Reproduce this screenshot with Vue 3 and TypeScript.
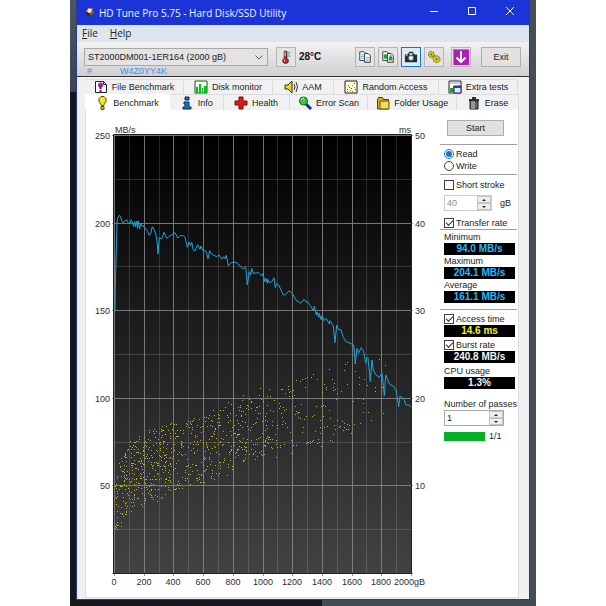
<script setup lang="ts">
import { ref } from 'vue'

interface Tab { name: string; icon: string }

const backTabs: Tab[] = [
  { name: 'File Benchmark', icon: 'file' },
  { name: 'Disk monitor', icon: 'monitor' },
  { name: 'AAM', icon: 'speaker' },
  { name: 'Random Access', icon: 'random' },
  { name: 'Extra tests', icon: 'extra' },
]
const frontTabs: Tab[] = [
  { name: 'Benchmark', icon: 'bulb' },
  { name: 'Info', icon: 'info' },
  { name: 'Health', icon: 'health' },
  { name: 'Error Scan', icon: 'scan' },
  { name: 'Folder Usage', icon: 'folder' },
  { name: 'Erase', icon: 'erase' },
]
const tools = [
  { name: 'Copy text', icon: 'copy' },
  { name: 'Copy image', icon: 'copygreen' },
  { name: 'Save screenshot', icon: 'camera' },
  { name: 'Options', icon: 'gears' },
  { name: 'Minimize to tray', icon: 'down' },
]

const active = ref('Benchmark')
const mode = ref('read')
const shortStroke = ref(false)
const transferRate = ref(true)
const accessTime = ref(true)
const burstRate = ref(true)
const strokeSize = ref(40)
const passes = ref(1)
const done = 100

// Plot area inside the chart, in chart units
const left = 114
const top = 135
const width = 297
const height = 438

const columns = Array.from({ length: 21 }, (_, i) => ({ x: Math.round(left + (i * width) / 20), major: i % 2 === 0 }))
const rows = Array.from({ length: 11 }, (_, i) => ({ y: Math.round(top + (i * height) / 10), major: i % 2 === 0 }))
const speedLabels = [250, 200, 150, 100, 50].map((value, i) => ({ value, y: top + 4 + Math.round((i * height) / 5) }))
const timeLabels = [50, 40, 30, 20, 10].map((value, i) => ({ value, y: top + 4 + Math.round((i * height) / 5) }))
const sizeLabels = Array.from({ length: 10 }, (_, i) => ({ value: i * 200, x: Math.round(left + (i * width) / 10) }))

// Transfer rate samples, three units per chart unit, relative to (85, 120)
const samples: number[][] = [
  [90, 572], [91, 500], [94, 390], [96, 310], [98, 293], [103, 286], [107, 290], [110, 303], [115, 309], [119, 303],
  [125, 299], [129, 307], [134, 312], [138, 299], [143, 309], [146, 320], [149, 304], [152, 321], [155, 303], [158, 325],
  [160, 302], [164, 326], [167, 310], [171, 318], [174, 316], [178, 323], [182, 325], [188, 335], [193, 346], [197, 340],
  [202, 320], [208, 330], [213, 345], [217, 370], [219, 402], [223, 352], [230, 357], [237, 337], [245, 355], [254, 348],
  [270, 338], [278, 354], [286, 347], [295, 347], [300, 352], [303, 365], [307, 382], [312, 366], [316, 377], [320, 366],
  [325, 390], [330, 393], [338, 374], [345, 388], [348, 378], [354, 392], [362, 393], [365, 400], [369, 416], [374, 392],
  [380, 403], [395, 410], [403, 405], [410, 418], [416, 410], [420, 416], [424, 406], [430, 437], [440, 427], [453, 427],
  [466, 438], [475, 447], [482, 440], [487, 495], [493, 455], [497, 465], [500, 445], [505, 460], [520, 458], [531, 468],
  [534, 460], [539, 485], [543, 475], [547, 490], [549, 478], [553, 488], [560, 485], [567, 473], [571, 503], [575, 490],
  [581, 495],
]
// Second half of the run, relative to (250, 290)
const tail: number[][] = [
  [93, 0], [100, 15], [107, 14], [117, 2], [128, 12], [138, 30], [152, 40], [162, 28], [168, 36], [173, 36],
  [180, 46], [190, 62], [193, 48], [199, 75], [201, 66], [206, 82], [208, 70], [213, 89], [217, 76], [222, 92], [228, 85],
  [238, 102], [240, 92], [247, 104], [250, 108], [255, 158], [260, 105], [265, 118], [273, 120], [279, 140], [288, 155],
  [297, 158], [311, 165], [316, 222], [321, 175], [326, 188], [334, 173], [341, 185], [347, 220], [350, 205], [354, 203],
  [361, 275], [366, 210], [370, 240], [378, 255], [388, 262], [396, 250], [403, 317], [407, 255], [412, 265], [418, 282],
  [432, 290], [438, 300], [446, 350], [450, 318], [462, 328], [468, 345], [478, 345], [483, 352],
]
const trace = [...samples, ...tail.map(([x, y]) => [x + 495, y + 510])]
  .map(([x, y]) => `${(85 + x / 3).toFixed(1)},${(120 + y / 3).toFixed(1)}`)
  .join(' ')

// Access time dots: dense short seeks come from a fixed-seed spread, long seeks are listed one by one
const lowerEdge = [[114, 536], [120, 528], [130, 515], [144, 505], [174, 496], [204, 484], [234, 474], [262, 460], [310, 454]]
const upperEdge = [[114, 488], [120, 457], [130, 440], [144, 428], [174, 420], [204, 408], [234, 398], [262, 386], [310, 373]]
function edge(table: number[][], x: number): number {
  for (let i = 1; i < table.length; i++) {
    const [x0, y0] = table[i - 1]
    const [x1, y1] = table[i]
    if (x <= x1) return y0 + ((y1 - y0) * (x - x0)) / (x1 - x0)
  }
  return table[table.length - 1][1]
}
let seed = 20417
function random(): number {
  seed = (seed + 0x6d2b79f5) | 0
  let t = Math.imul(seed ^ (seed >>> 15), 1 | seed)
  t = (t + Math.imul(t ^ (t >>> 7), 61 | t)) ^ t
  return ((t ^ (t >>> 14)) >>> 0) / 4294967296
}
const dots: number[][] = []
for (let i = 0; i < 900; i++) {
  const x = left + 1 + (width - 1) * (1 - Math.sqrt(random()))
  const t = random() * 0.92 + random() * 0.08
  if (x > 292) continue
  const low = edge(lowerEdge, x)
  dots.push([Math.round(x), Math.round(low + (edge(upperEdge, x) - low) * t + random() * 4 - 2)])
}
const longSeeks: number[][] = [
  [128, 300], [121, 303], [131, 315], [126, 318], [139, 270], [151, 274], [156, 268], [164, 263], [165, 291], [170, 262],
  [184, 261], [190, 252], [201, 267], [217, 270], [222, 283], [227, 290], [229, 298], [238, 236], [247, 268], [249, 290],
  [250, 301], [253, 280], [255, 296], [273, 303], [284, 222], [291, 217], [283, 241], [290, 283], [316, 243], [328, 260],
  [328, 282], [341, 268], [351, 284], [375, 291], [375, 302], [388, 206], [405, 226], [397, 290], [310, 332], [323, 325],
  [338, 327], [338, 338], [339, 367], [353, 365], [363, 391], [400, 368], [331, 398], [311, 403], [304, 428], [297, 405],
  [294, 417], [290, 401], [287, 416], [282, 399], [283, 411], [280, 421], [275, 392], [270, 407], [266, 411], [260, 390],
  [255, 418], [252, 404], [248, 433], [246, 453], [241, 451], [239, 383], [236, 360], [230, 407], [225, 349], [223, 411],
  [218, 346], [215, 366], [212, 469], [210, 428], [207, 457], [204, 447], [201, 460], [198, 347], [194, 422], [192, 376],
  [187, 452], [185, 379], [181, 453], [179, 458], [175, 455], [169, 377], [167, 458], [162, 387], [159, 410], [156, 427],
  [153, 342], [150, 384], [148, 367], [144, 380], [143, 365], [140, 370], [136, 371], [137, 464], [134, 348], [128, 466],
  [213, 347], [209, 389], [262, 310], [216, 305], [259, 328], [220, 378], [210, 410], [190, 449], [170, 456], [139, 363],
]
longSeeks.forEach(([x, y]) => dots.push([Math.round(250 + x / 3), Math.round(290 + y / 3)]))
</script>

<template>
  <div class="desktop">
    <main class="window">
      <header class="titlebar">
        <svg class="app-icon" viewBox="0 0 12 12" aria-hidden="true">
          <path d="M1 5 5 1l6 2v4L6 11 3 9z" fill="#3a2c20" />
          <path d="M2 5 5 1l5 1-3 5z" fill="#c8a878" /><circle cx="6" cy="4" r="2" fill="#fff0d0" />
          <path d="M7 7l3-4 1 3-4 4z" fill="#7c6850" />
        </svg>
        <h1>HD Tune Pro 5.75 - Hard Disk/SSD Utility</h1>
        <div class="caption-buttons">
          <button aria-label="Minimize"><svg viewBox="0 0 10 10"><path d="M1 5.500h8" /></svg></button>
          <button aria-label="Maximize"><svg viewBox="0 0 10 10"><path d="M1.500 1.500h7v7h-7z" /></svg></button>
          <button aria-label="Close"><svg viewBox="0 0 10 10"><path d="M1 1l8 8M9 1l-8 8" /></svg></button>
        </div>
      </header>

      <nav class="menu">
        <button><u>F</u>ile</button>
        <button><u>H</u>elp</button>
      </nav>

      <section class="toolbar">
        <div class="drive">
          <div class="combo">
            <select aria-label="Drive"><option>ST2000DM001-1ER164 (2000 gB)</option></select>
            <svg class="chevron" viewBox="0 0 8 5"><path d="M0.500 0.500 4 4 7.500 0.500" /></svg>
          </div>
          <div class="serial"><span>#</span><span>W4Z0YY4K</span></div>
        </div>
        <button class="tool" aria-label="Temperature">
          <svg viewBox="0 0 16 16">
            <path d="M6 1.500h3v8l1.500 1.500v3l-1.500 1h-3l-1.500-1v-3L6 9.500z" fill="#d81820" stroke="#302020" />
            <path d="M6.500 2h1v5h-1z" fill="#f4f4f4" /><path d="M6 11h1v2H6z" fill="#fff" />
            <path d="M10 3h3M10 5h2M10 7h3" stroke="#309090" />
          </svg>
        </button>
        <strong class="temperature">28°C</strong>
        <div class="tools">
          <button v-for="t in tools" :key="t.name" :class="['tool', t.icon]" :aria-label="t.name">
            <svg v-if="t.icon === 'copy' || t.icon === 'copygreen'" viewBox="0 0 16 16">
              <path d="M2 2h5l2 2v8H2z" fill="#fff" stroke="#303848" />
              <path d="M7.500 4h4l2.500 2.500V14H7.500z" fill="#fff" stroke="#202020" />
              <g v-if="t.icon === 'copy'" stroke="#5cb0f0"><path d="M3 5.500h4M3 7.500h4M3 9.500h4M9 8.500h4M9 10.500h4M9 12.500h3" /></g>
              <g v-else fill="#20a030"><path d="M3 5h4v5H3z" /><path d="M9 8h4v4H9z" /><path d="M10 6h2v2h-2z" fill="#3060c0" /></g>
            </svg>
            <svg v-else-if="t.icon === 'camera'" viewBox="0 0 16 16">
              <path d="M1 5h3l2-3h4l2 3h3v9H1z" fill="#26302c" />
              <path d="M6 3.500h4v2H6z" fill="#b8d8c8" /><circle cx="8" cy="9" r="3" fill="#90a89c" /><path d="M7 7h2v4H7zM6 8h4v2H6z" fill="#e8fff0" />
              <path d="M2 6h2v1H2z" fill="#d0d0d0" />
            </svg>
            <svg v-else-if="t.icon === 'gears'" viewBox="0 0 16 16">
              <circle cx="5" cy="5" r="3.500" fill="#d0c028" stroke="#706410" stroke-dasharray="2 1" />
              <circle cx="11" cy="10.500" r="4" fill="#d0c028" stroke="#706410" stroke-dasharray="2 1" />
              <circle cx="5" cy="5" r="1" fill="#706410" /><circle cx="11" cy="10.500" r="1" fill="#706410" /><path d="M5 9l4-3" stroke="#807018" />
            </svg>
            <svg v-else viewBox="0 0 16 16">
              <path d="M0 0h16v16H0z" fill="#b01cb8" /><path d="M0 0h16v1H1v15H0z" fill="#d860dc" />
              <path d="M8 2v11M3.500 8.500 8 13l4.500-4.500" fill="none" stroke="#fff" stroke-width="2" />
            </svg>
          </button>
        </div>
        <button class="exit">Exit</button>
      </section>

      <section class="content">
        <nav v-for="(row, r) in [backTabs, frontTabs]" :key="r" :class="['tabs', r === 0 ? 'back' : 'front']">
          <button v-for="tab in row" :key="tab.name" :class="['tab', { active: active === tab.name }]" @click="active = tab.name">
            <svg viewBox="0 0 14 14" aria-hidden="true">
              <g v-if="tab.icon === 'file'">
                <path d="M1.500 1.500h8l3 3v8h-11z" fill="#fff" stroke="#222" /><path d="M9.500 1.500v3h3" fill="none" stroke="#222" />
                <circle cx="6.500" cy="5" r="2.500" fill="#a020b0" /><path d="M5.500 6h2v3h-2zM5.500 10h2v2h-2z" fill="#701080" />
              </g>
              <g v-else-if="tab.icon === 'monitor'">
                <path d="M1 1h12v12H1z" fill="#f4fff0" stroke="#205020" /><path d="M2 13V7h2v6zM5 13V4h2v9zM8 13V8h1v5zM10 13V6h3v7z" fill="#10b820" />
              </g>
              <g v-else-if="tab.icon === 'speaker'">
                <path d="M1 5h3l4-4v12L4 9H1z" fill="#e8d820" stroke="#333010" /><path d="M10 4q2 3 0 6M12 2q3 5 0 10" fill="none" stroke="#333" />
              </g>
              <g v-else-if="tab.icon === 'random'">
                <path d="M1 1h12v12H1z" fill="#fffbd8" stroke="#222" />
                <path d="M3 9h1v1H3zM5 7h1v1H5zM7 8h1v1H7zM4 5h1v1H4zM10 3h1v1h-1zM11 9h1v1h-1z" fill="#d02020" /><path d="M3 11h1v1H3zM6 10h1v1H6zM8 5h1v1H8zM10 7h1v1h-1zM8 11h1v1H8z" fill="#c09000" />
              </g>
              <g v-else-if="tab.icon === 'extra'">
                <path d="M1 1h12v12H1z" fill="#fff" stroke="#222" /><path d="M2 2h10v2H2z" fill="#c8d0d8" /><path d="M2 12V8h3V6h1v6z" fill="#10a828" /><path d="M6 6h7v7H6z" fill="#e0e8ff" stroke="#222060" /><path d="M6 6h7v2H6z" fill="#3040a0" />
              </g>
              <g v-else-if="tab.icon === 'bulb'">
                <path d="M6 0.500h3l2 2v3L8.500 9.500h-2L4 5.500v-3z" fill="#f0e820" stroke="#504c10" /><path d="M6 2h1v3H6z" fill="#fff" /><path d="M6 10.500h3v3H6z" fill="#d8c820" stroke="#504c10" />
              </g>
              <g v-else-if="tab.icon === 'info'">
                <path d="M5 1h4v3H5zM4 6h5v5h2v2H3v-2h2V8H4z" fill="#1870d0" stroke="#102850" />
              </g>
              <path v-else-if="tab.icon === 'health'" d="M5 1h4v4h4v4H9v4H5V9H1V5h4z" fill="#e01818" stroke="#701010" />
              <g v-else-if="tab.icon === 'scan'">
                <path d="M8 8l5 5" stroke="#183080" stroke-width="3" /><circle cx="5.500" cy="5" r="4" fill="#30d040" stroke="#106020" /><path d="M3 4q1-2 3-2" stroke="#d8ffd8" fill="none" />
              </g>
              <g v-else-if="tab.icon === 'folder'">
                <path d="M1.500 3.500l1-2h4l1 2h5v9.500h-11z" fill="#d8b020" stroke="#504010" /><path d="M4 5h9v8H4z" fill="#f4dc50" stroke="#605010" />
              </g>
              <g v-else>
                <path d="M2 3h10v2H2zM5 1h4v2H5z" fill="#333" /><path d="M3 5h8v8H3z" fill="#606060" stroke="#222" /><path d="M5 5v8M7 5v8" stroke="#ccc" />
              </g>
            </svg>
            <span>{{ tab.name }}</span>
          </button>
        </nav>

        <div class="panel">
          <svg class="chart" viewBox="86 110 348 487" role="img" aria-label="Transfer rate and access time">
            <defs>
              <linearGradient id="plot" x1="0" y1="0" x2="0" y2="1">
                <stop offset="0" stop-color="#000" /><stop offset="1" stop-color="#424242" />
              </linearGradient>
            </defs>
            <rect :x="left" :y="top" :width="width" :height="height" fill="url(#plot)" />
            <g class="grid">
              <rect v-for="c in columns" :key="c.x" :class="{ major: c.major }" :x="c.x" :y="top" width="1" :height="height + 3" />
              <rect v-for="r in rows" :key="r.y" :class="{ major: r.major }" :x="left - 2" :y="r.y" :width="width + 4" height="1" />
            </g>
            <path class="frame" d="M113.500 573.500V134.500H411.500V573.500z" />
            <g class="dots"><rect v-for="(d, i) in dots" :key="i" :x="d[0]" :y="d[1]" width="1" height="1" /></g>
            <polyline class="trace" :points="trace" />
            <text x="115" y="133">MB/s</text>
            <text x="411" y="133" text-anchor="end">ms</text>
            <text v-for="l in speedLabels" :key="l.value" x="110" :y="l.y" text-anchor="end">{{ l.value }}</text>
            <text v-for="l in timeLabels" :key="l.value" x="415" :y="l.y">{{ l.value }}</text>
            <text v-for="l in sizeLabels" :key="l.value" :x="l.x" y="585" text-anchor="middle">{{ l.value }}</text>
            <text x="394" y="585">2000gB</text>
          </svg>

          <aside class="side">
            <button class="start">Start</button>
            <hr />
            <div class="group modes">
              <label><input v-model="mode" type="radio" name="mode" value="read" />Read</label>
              <label><input v-model="mode" type="radio" name="mode" value="write" />Write</label>
            </div>
            <hr />
            <div class="group stroke">
              <label><input v-model="shortStroke" type="checkbox" />Short stroke</label>
              <div class="spin-row">
                <div class="spin small">
                  <input v-model="strokeSize" type="text" aria-label="Short stroke size" disabled />
                  <div class="arrows"><button disabled aria-label="Increase size"><i class="up"></i></button><button disabled aria-label="Decrease size"><i class="dn"></i></button></div>
                </div>
                <span>gB</span>
              </div>
              <label class="rate"><input v-model="transferRate" type="checkbox" />Transfer rate</label>
            </div>
            <hr />
            <div class="group rates">
              <span>Minimum</span><output class="cyan">94.0 MB/s</output>
              <span>Maximum</span><output class="cyan">204.1 MB/s</output>
              <span>Average</span><output class="cyan">161.1 MB/s</output>
            </div>
            <hr />
            <div class="group times">
              <label><input v-model="accessTime" type="checkbox" />Access time</label><output class="yellow">14.6 ms</output>
              <label><input v-model="burstRate" type="checkbox" />Burst rate</label><output>240.8 MB/s</output>
              <span>CPU usage</span><output>1.3%</output>
            </div>
            <div class="group passes">
              <label for="passes">Number of passes</label>
              <div class="spin">
                <input id="passes" v-model="passes" type="text" />
                <div class="arrows"><button aria-label="More passes" @click="passes++"><i class="up"></i></button><button aria-label="Fewer passes" @click="passes--"><i class="dn"></i></button></div>
              </div>
              <div class="progress"><div class="bar"><div class="fill" :style="{ width: done + '%' }"></div></div><span>1/1</span></div>
            </div>
          </aside>
        </div>
      </section>
    </main>
  </div>
</template>

<style>
body { margin: 0; background: #fff; }
</style>

<style scoped>
* { box-sizing: border-box; }
.desktop {
  min-height: 100vh;
  margin: 0 70px;
  padding: 0 6px 8px;
  background:
    linear-gradient(90deg, #17181d 54%, #434c55 54%) bottom / 100% 8px no-repeat,
    linear-gradient(#4a5864, #3a4450 92px, #14171d 92px) left / 6px 100% no-repeat,
    #454e59;
  font: 9px/12px "Liberation Sans", Arial, sans-serif;
  color: #222;
}
button, input, select { font: inherit; color: inherit; margin: 0; padding: 0; border: 0; background: none; }
hr { width: 100%; height: 1px; margin: 0; border: 0; background: #a0a0a0; }
.window { background: #f0f0f2; border: solid #29398c; border-width: 0 1px 1px; }
.titlebar { display: flex; align-items: center; height: 25px; padding-left: 7px; background: #1b34d8; color: #f0f4ff; }
.app-icon { width: 11px; height: 11px; margin-right: 4px; }
h1 { flex: 1; margin: 0; font: 10px/14px "Open Sans", sans-serif; white-space: nowrap; }
.caption-buttons { display: flex; }
.caption-buttons button { width: 38px; height: 24px; }
.caption-buttons svg { width: 10px; height: 10px; fill: none; stroke: #fff; }
.menu { display: flex; gap: 12px; height: 17px; padding-left: 5px; background: #dde5ee; font: 10px/17px "Open Sans", sans-serif; }
.toolbar {
  display: flex; align-items: flex-start; height: 35px; padding: 5px 8px 0 7px;
  background: linear-gradient(#f2f2f2, #cfcfcf); border-bottom: 1px solid #303030;
}
.drive { flex: 1; }
.combo { display: flex; align-items: center; height: 18px; border: 1px solid #a8a8a8; background: #e3e3e3; margin-top: 1px; padding: 0 4px 0 3px; }
.combo select { flex: 1; appearance: none; min-width: 0; }
.chevron { width: 8px; height: 5px; fill: none; stroke: #606060; }
.serial { display: flex; line-height: 10px; color: #3994ee; padding-left: 3px; }
.serial span:first-child { width: 33px; }
.tool { display: grid; place-items: center; width: 20px; height: 20px; border: 1px solid #b4b4b4; background: #e4e4e4; }
.tool svg { width: 14px; height: 14px; }
.drive + .tool { margin-left: 8px; }
.tool.camera { border: 1px solid #1874d0; background: #dcecf8; }
.tool.down { margin-left: 4px; }
.tool.down svg { width: 16px; height: 16px; }
.temperature { width: 59px; padding-left: 3px; font-size: 10px; line-height: 20px; color: #111; }
.tools { display: flex; gap: 3px; margin-right: 10px; }
.exit { width: 40px; height: 20px; border: 1px solid #adadad; background: #e2e2e2; }
.content { padding: 2px 10px 1px 8px; }
.tabs { display: grid; }
.tabs.back { grid-template-columns: 99fr 89fr 61fr 105fr 79fr; height: 15px; padding-right: 1px; }
.tabs.front { grid-template-columns: 85fr 54fr 66fr 79fr 89fr 62fr; height: 16px; }
.tab { display: flex; align-items: center; justify-content: center; gap: 4px; border: solid #dcdcdc; border-width: 1px 1px 0 0; background: #f1f1f1; white-space: nowrap; min-width: 0; }
.tab svg { width: 14px; height: 14px; }
.tab.active { background: #fff; border-color: #fff; }
.panel { display: flex; background: #fff; border: solid #dcdcdc; border-width: 0 1px 1px; }
.chart { flex: 1; min-width: 0; display: block; font-size: 9px; fill: #302c38; }
.grid { fill: #fff; fill-opacity: 0.14; shape-rendering: crispEdges; }
.grid .major { fill: #888; fill-opacity: 0.85; }
.frame { fill: none; stroke: #202020; }
.dots { fill: #b4b42c; }
.trace { fill: none; stroke: #20a4d8; stroke-width: 1; stroke-linejoin: round; }
.side { display: flex; flex-direction: column; width: 84px; padding: 10px 1px 0 6px; }
.start { width: 57px; height: 16px; margin: 0 0 8px 7px; border: 1px solid #adadad; background: #e1e1e1; }
.group { display: flex; flex-direction: column; padding-left: 4px; }
.group > span, .group label { height: 12px; white-space: nowrap; }
label { display: flex; align-items: center; gap: 2px; }
.modes { padding-top: 3px; padding-bottom: 2px; }
.stroke { padding-top: 4px; }
.spin-row { display: flex; align-items: center; gap: 8px; margin: 4px 0 6px; }
.rates { padding-bottom: 6px; padding-top: 1px; }
.times { padding-top: 3px; }
.times output + * { margin-top: 2px; }
.passes { padding-top: 9px; }
input[type="radio"], input[type="checkbox"] { appearance: none; display: grid; place-items: center; flex: none; width: 10px; height: 10px; border: 1px solid #404040; background: #fff; }
input[type="radio"] { border-radius: 50%; }
input[type="radio"]:checked { border-color: #1677cc; }
input[type="radio"]:checked::before { content: ""; width: 6px; height: 6px; border-radius: 50%; background: #1677cc; }
input[type="checkbox"]:checked::before { content: ""; width: 6px; height: 3px; border: solid #303030; border-width: 0 0 1px 1px; transform: rotate(-45deg); margin-bottom: 2px; }
output { width: 71px; height: 12px; background: #000; color: #f4f4f4; text-align: center; font-weight: bold; font-size: 10px; }
.cyan { color: #28b8f8; }
.yellow { color: #f4f020; }
.spin { display: flex; width: 60px; height: 16px; border: 1px solid #a8a8a8; background: #fff; }
.spin.small { width: 48px; color: #888; border-color: #ccc; }
.spin input { flex: 1; min-width: 0; padding-left: 2px; }
.arrows { display: flex; flex-direction: column; width: 14px; }
.arrows button { flex: 1; display: grid; place-items: center; border: 1px solid #c4c4c4; background: #eee; }
.arrows i { border: solid transparent; border-width: 0 2px; }
.arrows .up { border-bottom: 2px solid #222; }
.arrows .dn { border-top: 2px solid #222; }
.progress { display: flex; align-items: center; gap: 4px; margin-top: 4px; }
.bar { width: 41px; height: 9px; background: #e6e6e6; }
.fill { height: 100%; background: #06b025; }
</style>
